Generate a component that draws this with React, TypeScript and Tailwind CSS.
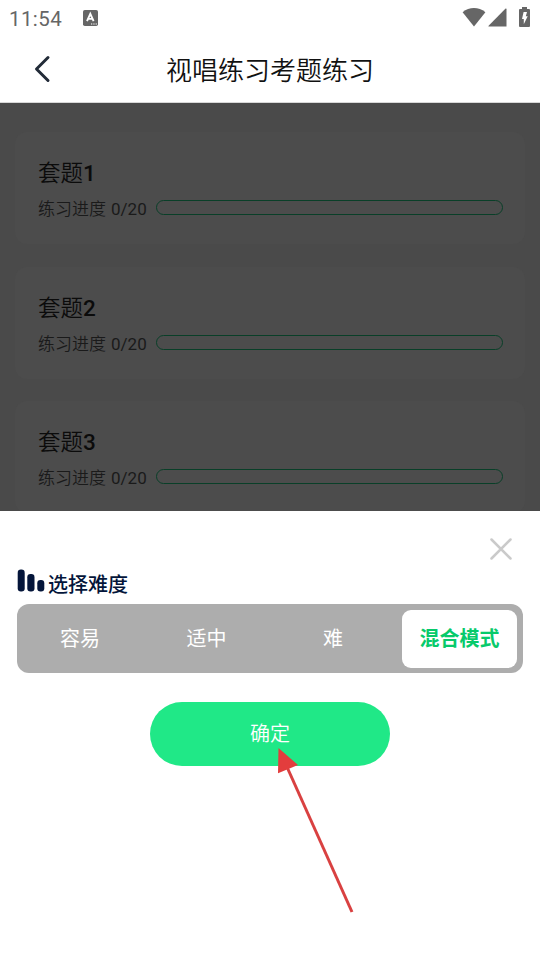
import { clsx } from "clsx";

const sets = [
  { name: "套题", index: 1, done: 0, total: 20 },
  { name: "套题", index: 2, done: 0, total: 20 },
  { name: "套题", index: 3, done: 0, total: 20 },
];

const levels = ["容易", "适中", "难", "混合模式"];
const activeLevel = "混合模式";

const StatusBar = () => (
  <div className="h-[36px] pl-[9px] pr-[10px] flex items-center text-[#666666]">
    <span className="w-[53px] pt-[2px] text-[20.500px] leading-none tracking-[0.4px]">11:54</span>
    <svg className="ml-[21px]" width="15" height="16" viewBox="0 0 15 16">
      <rect width="15" height="16" rx="1.8" fill="#666666" />
      <path d="M4 11.2 7.3 3.8 10.6 11.2M5.3 8.9h4" fill="none" stroke="#fff" strokeWidth="1.9" />
      <path d="M8 14h1.3M10.3 14h1.3M12.6 14h1.3" stroke="#fff" strokeWidth="1.2" />
    </svg>

    <div className="ml-auto -mt-[2px] flex items-center">
      <svg width="24" height="19" viewBox="0 0 24 19" fill="#666666">
        <path d="M.6 4.2C7.4-1.3 16.500-1.300 23.400 4.200L12 18.600Z" />
      </svg>
      <svg className="ml-[2px]" width="19" height="19" viewBox="0 0 19 19" fill="#666666">
        <path d="M17.600.6Q18.500 0 18.500 1.200V18.600H.8Q0 18.600.6 17.700Z" />
      </svg>
      <svg className="ml-[12px]" width="11" height="20" viewBox="0 0 11 20">
        <path d="M3 0h5v2h2q1 0 1 1v16q0 1-1 1H1q-1 0-1-1V3q0-1 1-1h2Z" fill="#666666" />
        <path d="M4.600 5H8L6.800 9.300H8.700L4.800 17.200V12H3Z" fill="#fff" />
      </svg>
    </div>
  </div>
);

const Header = () => (
  <header className="h-[67px] grid grid-cols-[1fr_auto_1fr] items-center border-b border-[#d8d8d8] bg-white">
    <svg className="ml-[34px]" width="17" height="28" viewBox="0 0 17 28" fill="none">
      <path d="M14 2.500 2.500 14 14 25.500" stroke="#222b38" strokeWidth="3" strokeLinecap="round" strokeLinejoin="round" />
    </svg>
    <h1 className="pt-[4px] text-[26px] leading-none font-[350] text-[#111111]">视唱练习考题练习</h1>
  </header>
);

const SetCard = ({ name, index, done, total }: (typeof sets)[number]) => (
  <div className="h-[112px] shrink-0 rounded-[12px] bg-[#4c4c4c] pl-[23px] pr-[22px] pt-[27px]">
    <h2 className="text-[22.500px] leading-[28px] font-[350] text-[#0b0b0b]">
      {name}
      <span className="font-medium">{index}</span>
    </h2>
    <div className="mt-[9px] flex items-start">
      <span className="w-[118px] whitespace-nowrap text-[17px] leading-[26px] font-[350] text-[#1a1a1a]">
        练习进度
        <span className="ml-[5px] font-normal">
          {done}/{total}
        </span>
      </span>
      <div className="mt-[4px] h-[15px] flex-1 rounded-full border border-[#093f28]" />
    </div>
  </div>
);

const DifficultySheet = () => (
  <section className="h-[449px] bg-white px-[17px] pt-[26px] flex flex-col">
    <svg className="self-end mr-[10px]" width="24" height="24" viewBox="0 0 24 24" fill="none">
      <path d="M2.500 2.500 21.500 21.500M21.500 2.500 2.500 21.500" stroke="#cacaca" strokeWidth="2.500" strokeLinecap="round" />
    </svg>

    <div className="mt-[8px] h-[31px] flex items-start text-[#04153a]">
      <svg width="28" height="23" viewBox="0 0 28 23" fill="#04153a">
        <rect x="0.700" y="0.500" width="7" height="22" rx="3.200" />
        <rect x="10.300" y="5" width="7.200" height="17.500" rx="3.200" />
        <rect x="20.300" y="11" width="7" height="11.500" rx="3.200" />
      </svg>
      <h2 className="ml-[3px] pt-px text-[20px] leading-[30px] font-medium">选择难度</h2>
    </div>

    <div className="mt-[4px] h-[69px] shrink-0 rounded-[12px] bg-[#adadad] grid grid-cols-4">
      {levels.map((level) => (
        <div
          key={level}
          className={clsx(
            "ml-[5.500px] mr-[6px] mt-[6px] mb-[5px] rounded-[9px] flex items-center justify-center pb-px text-[20px] leading-none",
            level === activeLevel ? "bg-white font-bold text-[#07ca6b]" : "text-white"
          )}
        >
          {level}
        </div>
      ))}
    </div>

    <button className="mt-[29px] h-[64px] w-[240px] shrink-0 self-center rounded-full bg-[#20e887] text-[20px] font-[350] text-white">
      确定
    </button>
  </section>
);

// Red pointer laid over the confirm button
const Pointer = () => (
  <svg className="absolute left-[270px] top-[740px]" width="90" height="180" viewBox="0 0 90 180">
    <path d="M17 27 82 172" stroke="#d94141" strokeWidth="3" />
    <path d="M8.500 8 28 25 8 33.300Z" fill="#e33d3d" />
  </svg>
);

export default function App() {
  return (
    <div className="relative h-[960px] w-[540px] overflow-hidden bg-white font-[Roboto,'Noto_Sans_CJK_SC',sans-serif]">
      <StatusBar />
      <Header />
      <main className="h-[408px] overflow-hidden bg-[#4a4a4a] px-[15px] pt-[29px] flex flex-col gap-[22.700px]">
        {sets.map((set) => (
          <SetCard key={set.index} {...set} />
        ))}
      </main>
      <DifficultySheet />
      <Pointer />
    </div>
  );
}
